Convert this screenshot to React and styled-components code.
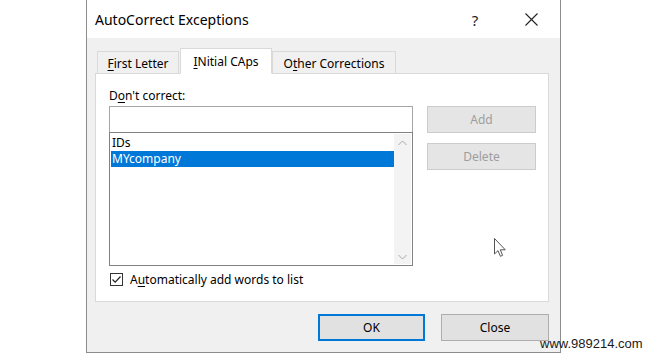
import React from 'react';
import styled, { createGlobalStyle } from 'styled-components';

const GlobalStyle = createGlobalStyle`
  body {
    margin: 0;
    background: #fff;
    font-family: 'Noto Sans', 'Open Sans', sans-serif;
    color: #000;
  }
`;

const Page = styled.div`
  position: relative;
  width: 646px;
  height: 355px;
  padding-left: 86px;
  box-sizing: border-box;
  overflow: hidden;
`;

const Dialog = styled.div`
  width: 475px;
  height: 353px;
  border: 1px solid #8c8c8c;
  border-top: none;
  box-sizing: border-box;
  display: flex;
  flex-direction: column;
  background: #f0f0f0;
`;

const TitleBar = styled.div`
  height: 38px;
  background: #fff;
  display: flex;
  align-items: center;
  padding: 1px 0 0 8px;
  box-sizing: border-box;
  flex-shrink: 0;
`;

const Title = styled.div`
  flex: 1;
  font-size: 14px;
  color: #000;
`;

const TitleButton = styled.div`
  width: 46px;
  height: 37px;
  display: flex;
  align-items: center;
  justify-content: center;
  font-size: 15px;
  color: #222;
  margin-right: ${(p) => p.$mr || 0}px;
`;

const Body = styled.div`
  flex: 1;
  display: flex;
  flex-direction: column;
  padding: 10px 11px 0 8px;
`;

const TabRow = styled.div`
  display: flex;
  align-items: flex-end;
  height: 26px;
  padding-left: 2px;
  position: relative;
  z-index: 1;
  margin-bottom: -1px;
`;

const Tab = styled.div`
  width: ${(p) => p.$w}px;
  height: ${(p) => (p.$active ? 26 : 23)}px;
  box-sizing: border-box;
  border: 1px solid #d9d9d9;
  border-bottom: ${(p) => (p.$active ? '1px solid #fff' : '1px solid #d9d9d9')};
  background: ${(p) => (p.$active ? '#fff' : '#f0f0f0')};
  font-size: 12px;
  display: flex;
  align-items: center;
  justify-content: center;
  margin-right: ${(p) => p.$gap || 0}px;
  padding-top: ${(p) => (p.$active ? 0 : 2)}px;
`;

const U = styled.span`
  text-decoration: underline;
  text-underline-offset: 2px;
`;

const Panel = styled.div`
  height: 229px;
  box-sizing: border-box;
  background: #fff;
  border: 1px solid #d9d9d9;
  padding: 14px 11px 0 13px;
  display: grid;
  grid-template-columns: 304px 109px;
  grid-template-rows: 18px 26px 134px auto;
  column-gap: 14px;
  flex-shrink: 0;
`;

const Label = styled.div`
  grid-column: 1;
  grid-row: 1;
  font-size: 12px;
  line-height: 16px;
`;

const TextInput = styled.div`
  grid-column: 1;
  grid-row: 2;
  border: 1px solid #a6a6a6;
  border-bottom: none;
  background: #fff;
`;

const List = styled.div`
  grid-column: 1;
  grid-row: 3;
  border: 1px solid #828282;
  box-sizing: border-box;
  display: flex;
  padding: 1px;
`;

const Items = styled.div`
  flex: 1;
  padding-top: 1px;
`;

const Item = styled.div`
  height: 16px;
  line-height: 16px;
  font-size: 12px;
  padding-left: 1px;
  background: ${(p) => (p.$selected ? '#0078d7' : 'transparent')};
  color: ${(p) => (p.$selected ? '#fff' : '#000')};
`;

const ScrollBar = styled.div`
  width: 17px;
  background: #f3f3f3;
  display: flex;
  flex-direction: column;
  justify-content: space-between;
  align-items: center;
  padding: 6px 0 4px;
`;

const SideButtons = styled.div`
  grid-column: 2;
  grid-row: 2 / span 2;
  display: flex;
  flex-direction: column;
  gap: 10px;
`;

const Button = styled.div`
  height: 27px;
  width: ${(p) => p.$w || 109}px;
  box-sizing: border-box;
  background: #e1e1e1;
  border: ${(p) => (p.$primary ? '2px solid #0078d7' : '1px solid #adadad')};
  color: ${(p) => (p.$disabled ? '#9e9e9e' : '#000')};
  font-size: 12px;
  display: flex;
  align-items: center;
  justify-content: center;
`;

const DisabledButton = styled(Button)`
  background: #e5e5e5;
  border-color: #cccccc;
`;

const CheckRow = styled.div`
  grid-column: 1 / span 2;
  grid-row: 4;
  display: flex;
  align-items: center;
  gap: 7px;
  padding: 7px 0 0 1px;
  font-size: 12px;
  height: 13px;
`;

const CheckBox = styled.div`
  width: 13px;
  height: 13px;
  box-sizing: border-box;
  border: 1px solid #333;
  background: #fff;
  display: flex;
  align-items: center;
  justify-content: center;
`;

const Footer = styled.div`
  display: flex;
  justify-content: flex-end;
  gap: 16px;
  padding-top: 12px;
`;

const Watermark = styled.div`
  position: absolute;
  left: 540px;
  top: 336px;
  font-family: 'Liberation Sans', Arial, sans-serif;
  font-size: 13px;
  color: #1a1a1a;
`;

const Cursor = styled.svg`
  position: absolute;
  left: 494px;
  top: 238px;
`;

const Chevron = ({ up }) => (
  <svg width="9" height="6" viewBox="0 0 9 6">
    <path
      d={up ? 'M0.5 5 L4.5 1 L8.5 5' : 'M0.5 1 L4.5 5 L8.5 1'}
      fill="none"
      stroke="#a8a8a8"
      strokeWidth="1"
    />
  </svg>
);

export default function App() {
  return (
    <Page>
      <GlobalStyle />
      <Dialog>
        <TitleBar>
          <Title>AutoCorrect Exceptions</Title>
          <TitleButton $mr={10}>?</TitleButton>
          <TitleButton $mr={6}>
            <svg width="13" height="13" viewBox="0 0 13 13">
              <path d="M0.5 0.5 L12.5 12.5 M12.5 0.5 L0.5 12.5" stroke="#222" strokeWidth="1.1" />
            </svg>
          </TitleButton>
        </TitleBar>
        <Body>
          <TabRow>
            <Tab $w={82} $gap={1}>
              <span><U>F</U>irst Letter</span>
            </Tab>
            <Tab $w={92} $active>
              <span><U>I</U>Nitial CAps</span>
            </Tab>
            <Tab $w={124}>
              <span>O<U>t</U>her Corrections</span>
            </Tab>
          </TabRow>
          <Panel>
            <Label>
              D<U>o</U>n't correct:
            </Label>
            <TextInput />
            <List>
              <Items>
                <Item>IDs</Item>
                <Item $selected>MYcompany</Item>
              </Items>
              <ScrollBar>
                <Chevron up />
                <Chevron />
              </ScrollBar>
            </List>
            <SideButtons>
              <DisabledButton $disabled>Add</DisabledButton>
              <DisabledButton $disabled>Delete</DisabledButton>
            </SideButtons>
            <CheckRow>
              <CheckBox>
                <svg width="11" height="11" viewBox="0 0 11 11">
                  <path d="M1.5 5.5 L4.2 8.2 L9.5 2.5" fill="none" stroke="#222" strokeWidth="1.2" />
                </svg>
              </CheckBox>
              <span>A<U>u</U>tomatically add words to list</span>
            </CheckRow>
          </Panel>
          <Footer>
            <Button $primary $w={107}>OK</Button>
            <Button $w={108}>Close</Button>
          </Footer>
        </Body>
      </Dialog>
      <Cursor width="13" height="20" viewBox="0 0 13 20">
        <path
          d="M0.5 0.5 L0.5 16 L4 12.6 L6.4 18.3 L8.6 17.4 L6.3 11.8 L11.3 11.8 Z"
          fill="#fff"
          stroke="#555"
          strokeWidth="1"
        />
      </Cursor>
      <Watermark>www.989214.com</Watermark>
    </Page>
  );
}
